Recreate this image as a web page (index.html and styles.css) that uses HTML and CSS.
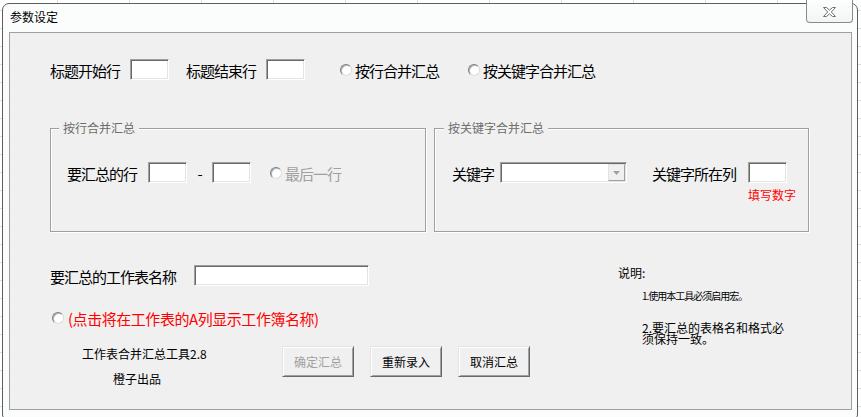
FILE: index.html
```html
<!DOCTYPE html>
<html lang="zh-CN">
<head>
<meta charset="utf-8">
<title>参数设定</title>
<link rel="stylesheet" href="styles.css">
</head>
<body>
<div class="desktop">
  <div class="window">
    <div class="titlebar"><span class="title">参数设定</span></div>
    <div class="close">
      <svg width="13" height="10" viewBox="0 0 13 10"><polygon points="0.5,0.5 3.5,0.5 6.5,3.2 9.5,0.5 12.5,0.5 8.3,5 12.5,9.5 9.5,9.5 6.5,6.8 3.5,9.5 0.5,9.5 4.7,5" fill="#fdfdfd" stroke="#707070" stroke-width="1"/></svg>
    </div>
    <div class="client">
      <div class="top-row">
        <span class="lbl">标题开始行</span>
        <span class="tb tb-a"></span>
        <span class="lbl">标题结束行</span>
        <span class="tb tb-b"></span>
        <span class="radio radio-a"><span class="dot"></span><span class="lbl">按行合并汇总</span></span>
        <span class="radio"><span class="dot"></span><span class="lbl">按关键字合并汇总</span></span>
      </div>

      <div class="groups">
        <div class="group g1">
          <span class="legend">按行合并汇总</span>
          <div class="grow">
            <span class="lbl gap11">要汇总的行</span>
            <span class="tb"></span>
            <span class="lbl dash">-</span>
            <span class="tb tb-c"></span>
            <span class="radio"><span class="dot"></span><span class="lbl disabled">最后一行</span></span>
          </div>
        </div>
        <div class="group g2">
          <span class="legend">按关键字合并汇总</span>
          <div class="grow">
            <span class="lbl gap6">关键字</span>
            <span class="combo"><span class="combo-btn"><svg width="7" height="4" viewBox="0 0 7 4"><polygon points="0,0 7,0 3.5,4" fill="#a0a0a0"/></svg></span></span>
            <span class="lbl gap12">关键字所在列</span>
            <span class="col-cell">
              <span class="tb"></span>
              <span class="hint">填写数字</span>
            </span>
          </div>
        </div>
      </div>

      <div class="bottom">
        <div class="left">
          <div class="name-row">
            <span class="lbl">要汇总的工作表名称</span>
            <span class="tb tb-wide"></span>
          </div>
          <div class="radio-row">
            <span class="dot"></span>
            <span class="lbl red">(点击将在工作表的A列显示工作簿名称)</span>
          </div>
          <div class="footer">
            <div class="credits">
              <div class="c1">工作表合并汇总工具2.8</div>
              <div class="c2">橙子出品</div>
            </div>
            <div class="buttons">
              <span class="btn disabled">确定汇总</span>
              <span class="btn">重新录入</span>
              <span class="btn">取消汇总</span>
            </div>
          </div>
        </div>
        <div class="notes">
          <div class="notes-title">说明:</div>
          <div class="note n1">1.使用本工具必须启用宏。</div>
          <div class="note n2">2.要汇总的表格名和格式必须保持一致。</div>
        </div>
      </div>
    </div>
  </div>
</div>
</body>
</html>
```

FILE: styles.css
```css
html, body {
  margin: 0;
  padding: 0;
}

body {
  width: 861px;
  height: 417px;
  overflow: hidden;
  font-family: "Noto Sans CJK SC", "Noto Sans", sans-serif;
  color: #000;
}

.desktop {
  width: 861px;
  height: 417px;
  box-sizing: border-box;
  padding: 3px 0 0 2px;
  background-color: #fff;
  background-image:
    linear-gradient(to right, #d9dcdc 1px, transparent 1px),
    linear-gradient(to bottom, #d9dcdc 1px, transparent 1px);
  background-size: 72px 100%, 100% 18px;
  background-position: 57px 0, 0 10px;
}

.window {
  position: relative;
  width: 856px;
  height: 416px;
  box-sizing: border-box;
  border: 1px solid #5e5e5e;
  border-radius: 7px 7px 4px 4px;
  background: rgba(251, 253, 253, 0.93);
}

.titlebar {
  height: 28px;
  box-sizing: border-box;
  padding: 6px 0 0 7px;
  font-size: 12px;
  line-height: 14px;
}

.close {
  position: absolute;
  left: 803px;
  top: -4px;
  width: 47px;
  height: 23px;
  box-sizing: border-box;
  border: 1px solid #8a8a8a;
  border-top: none;
  border-radius: 0 0 4px 4px;
  background: linear-gradient(#fdfefe, #f2f5f6);
  display: flex;
  align-items: center;
  justify-content: center;
  padding-top: 1px;
}

.close svg {
  display: block;
}

.client {
  margin-left: 6px;
  width: 843px;
  height: 378px;
  box-sizing: border-box;
  border: 1px solid #a0a0a0;
  background: #f0f0f0;
  padding: 26px 0 0 40px;
}

.lbl {
  font-size: 15px;
  letter-spacing: -1px;
  line-height: 21px;
  height: 21px;
  white-space: nowrap;
  padding-top: 1px;
  box-sizing: border-box;
}

.tb {
  display: block;
  width: 39px;
  height: 21px;
  box-sizing: border-box;
  background: #fff;
  border: 1px solid;
  border-color: #a0a0a0 #fff #fff #a0a0a0;
  box-shadow: inset 1px 1px 0 #696969, inset -1px -1px 0 #e3e3e3;
  flex: none;
}

.top-row {
  display: flex;
  align-items: flex-start;
  height: 21px;
}

.top-row .lbl {
  margin-right: 10px;
}

.tb-a {
  margin-right: 17px;
}

.tb-b {
  margin-right: 35px;
}

.radio {
  display: flex;
  align-items: center;
  height: 21px;
}

.radio-a {
  margin-right: 29px;
}

.top-row .radio .lbl {
  margin-right: 0;
}

.dot {
  display: block;
  width: 12px;
  height: 12px;
  box-sizing: border-box;
  border-radius: 50%;
  border: 1px solid;
  border-color: #7c7c7c #dcdcdc #dcdcdc #7c7c7c;
  background: #fff;
  box-shadow: inset 1px 1px 0 #b4b4b4;
  margin-right: 3px;
  flex: none;
}

.groups {
  display: flex;
  gap: 8px;
  margin-top: 48px;
}

.group {
  position: relative;
  height: 104px;
  box-sizing: border-box;
  border: 1px solid #a0a0a0;
  box-shadow: inset 1px 1px 0 #fff, 1px 1px 0 #fff;
}

.g1 {
  width: 376px;
}

.g2 {
  width: 375px;
}

.legend {
  position: absolute;
  top: -8px;
  left: 8px;
  padding: 0 4px;
  background: #f0f0f0;
  font-size: 12px;
  line-height: 14px;
  color: #6d6d6d;
  white-space: nowrap;
}

.g2 .legend {
  left: 9px;
}

.grow {
  display: flex;
  align-items: flex-start;
  padding: 33px 0 0 16px;
}

.g2 .grow {
  padding-left: 17px;
}

.gap11 {
  margin-right: 11px;
}

.gap6 {
  margin-right: 6px;
}

.gap12 {
  margin-right: 12px;
}

.dash {
  width: 25px;
  text-align: center;
}

.tb-c {
  margin-right: 19px;
}

.disabled {
  color: #a0a0a0;
}

.combo {
  display: flex;
  justify-content: flex-end;
  width: 127px;
  height: 21px;
  box-sizing: border-box;
  background: #fff;
  border: 1px solid;
  border-color: #a0a0a0 #fff #fff #a0a0a0;
  box-shadow: inset 1px 1px 0 #696969, inset -1px -1px 0 #e3e3e3;
  padding: 1px;
  margin-right: 25px;
}

.combo-btn {
  width: 17px;
  height: 17px;
  box-sizing: border-box;
  background: #f0f0f0;
  border: 1px solid;
  border-color: #e3e3e3 #a0a0a0 #a0a0a0 #e3e3e3;
  display: flex;
  align-items: center;
  justify-content: center;
}

.combo-btn svg {
  display: block;
}

.col-cell {
  display: flex;
  flex-direction: column;
}

.hint {
  margin-top: 5px;
  font-size: 12px;
  line-height: 14px;
  color: #ff0000;
  white-space: nowrap;
}

.bottom {
  display: flex;
  margin-top: 33px;
}

.left {
  width: 568px;
}

.name-row {
  display: flex;
  align-items: flex-start;
}

.name-row .lbl {
  margin-right: 18px;
}

.tb-wide {
  width: 175px;
}

.radio-row {
  display: flex;
  align-items: center;
  height: 21px;
  margin-top: 21px;
  margin-left: 2px;
}

.radio-row .dot {
  margin-right: 4px;
}

.red {
  color: #ff0000;
  letter-spacing: -0.45px;
}

.footer {
  display: flex;
  align-items: flex-start;
  margin-top: 18px;
}

.credits {
  width: 200px;
  margin-left: 32px;
  font-size: 12px;
  line-height: 14px;
  padding-top: 1px;
  white-space: nowrap;
}

.c2 {
  margin-top: 11px;
  margin-left: 31px;
}

.buttons {
  display: flex;
  gap: 16px;
}

.btn {
  display: flex;
  align-items: center;
  justify-content: center;
  width: 72px;
  height: 31px;
  box-sizing: border-box;
  background: #f0f0f0;
  border: 1px solid;
  border-color: #e3e3e3 #696969 #696969 #e3e3e3;
  box-shadow: inset 1px 1px 0 #fff, inset -1px -1px 0 #a0a0a0;
  font-size: 12px;
  line-height: 14px;
}

.notes {
  padding-top: 1px;
  font-size: 12px;
  line-height: 14px;
}

.note {
  margin-left: 24px;
  width: 148px;
}

.n1 {
  margin-top: 10px;
  font-size: 10px;
  letter-spacing: -1px;
  line-height: 12px;
  white-space: nowrap;
}

.n2 {
  margin-top: 20px;
  line-height: 11px;
}
```
